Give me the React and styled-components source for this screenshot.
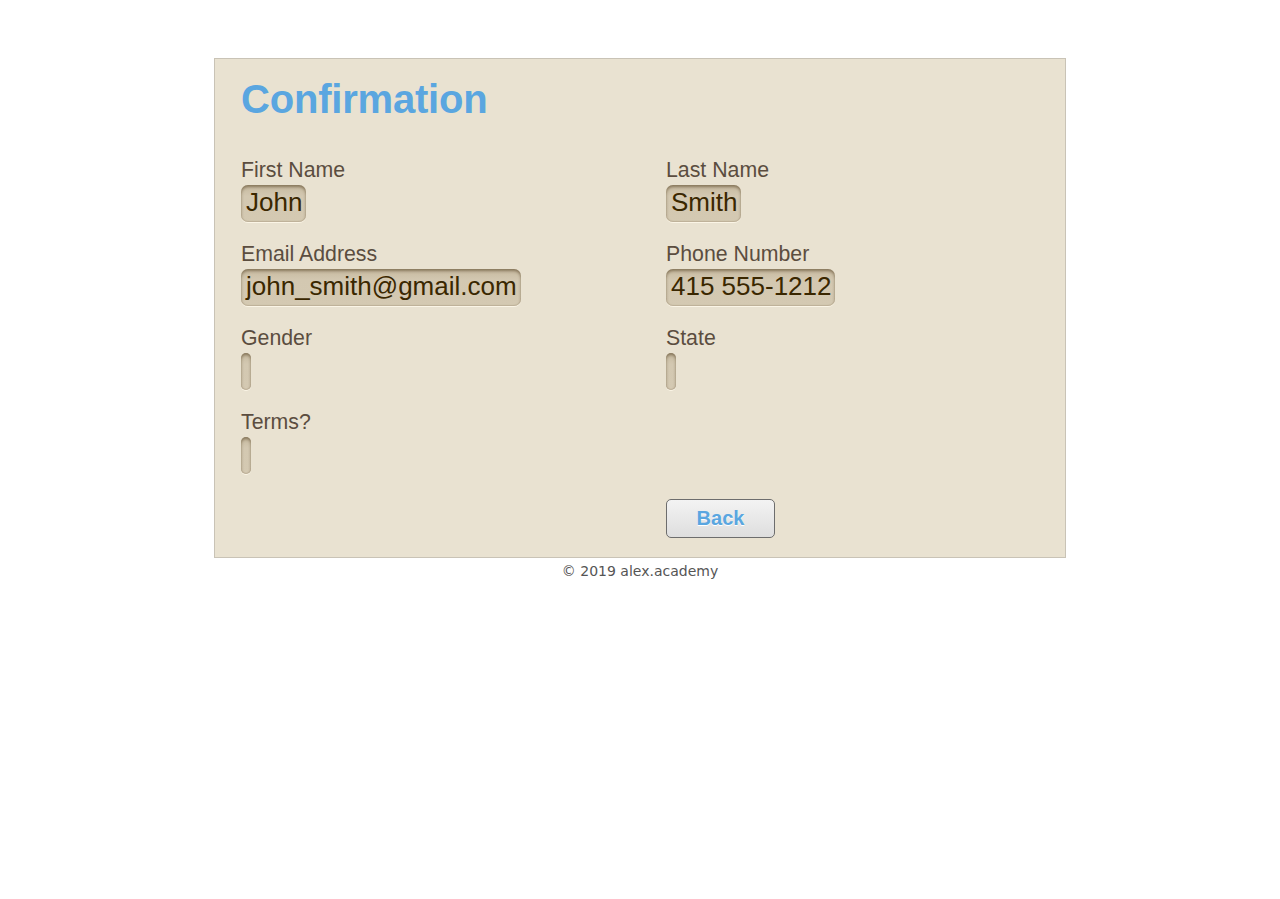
import styled, { createGlobalStyle } from "styled-components";

const GlobalStyle = createGlobalStyle`
  body {
    margin: 0;
    background: #ffffff;
    font-family: "Liberation Sans", Arial, sans-serif;
  }
`;

const Page = styled.div`
  padding-top: 58px;
`;

const Panel = styled.div`
  box-sizing: border-box;
  width: 852px;
  margin: 0 auto;
  padding: 17px 26px 19px;
  background: #e9e2d1;
  border: 1px solid #c9c3b6;
`;

const Title = styled.h1`
  margin: 0;
  font-size: 40px;
  line-height: 46px;
  font-weight: 700;
  letter-spacing: -0.2px;
  color: #5aa6e0;
`;

const Form = styled.div`
  margin-top: 36px;
  display: grid;
  grid-template-columns: 1fr 1fr;
  column-gap: 52px;
  row-gap: 20px;
`;

const Field = styled.div`
  display: flex;
  flex-direction: column;
  align-items: flex-start;
`;

const Label = styled.label`
  font-size: 21.3px;
  line-height: 24px;
  color: #5b4d3f;
  margin-bottom: 3px;
`;

const Value = styled.span`
  box-sizing: border-box;
  display: inline-block;
  min-width: 10px;
  height: 37px;
  padding: 2px 4px 4px 5px;
  font-size: 26px;
  line-height: 31px;
  color: #3a2700;
  background: linear-gradient(#c6b99f, #d3c8b1 30%, #d4c9b2);
  border-radius: 7px;
  box-shadow: inset 0 2px 3px rgba(70, 50, 20, 0.5),
    inset 0 -1px 1px rgba(120, 100, 70, 0.2), 0 1px 0 #fbf5e6;
  white-space: nowrap;
`;

const Actions = styled.div`
  grid-column: 2;
  grid-row: 5;
  margin-top: 5px;
`;

const Button = styled.button`
  box-sizing: border-box;
  width: 109px;
  height: 39px;
  border: 1px solid #6d6d6d;
  border-radius: 5px;
  background: linear-gradient(#f3f3f3, #dedede);
  font-family: "Liberation Sans", Arial, sans-serif;
  font-size: 20px;
  font-weight: 700;
  color: #5aa6e0;
  text-shadow: 0 1px 0 #ffffff;
  cursor: pointer;
`;

const Footer = styled.div`
  text-align: center;
  padding-top: 4px;
  font-family: "DejaVu Sans", Verdana, sans-serif;
  font-size: 14px;
  line-height: 18px;
  color: #555555;
`;

const fields = [
  { label: "First Name", value: "John" },
  { label: "Last Name", value: "Smith" },
  { label: "Email Address", value: "john_smith@gmail.com" },
  { label: "Phone Number", value: "415 555-1212" },
  { label: "Gender", value: "" },
  { label: "State", value: "" },
  { label: "Terms?", value: "" },
];

const App = () => {
  return (
    <Page>
      <GlobalStyle />
      <Panel>
        <Title>Confirmation</Title>
        <Form>
          {fields.map((f) => (
            <Field key={f.label}>
              <Label>{f.label}</Label>
              <Value>{f.value}</Value>
            </Field>
          ))}
          <Actions>
            <Button>Back</Button>
          </Actions>
        </Form>
      </Panel>
      <Footer>© 2019 alex.academy</Footer>
    </Page>
  );
};

export default App;
